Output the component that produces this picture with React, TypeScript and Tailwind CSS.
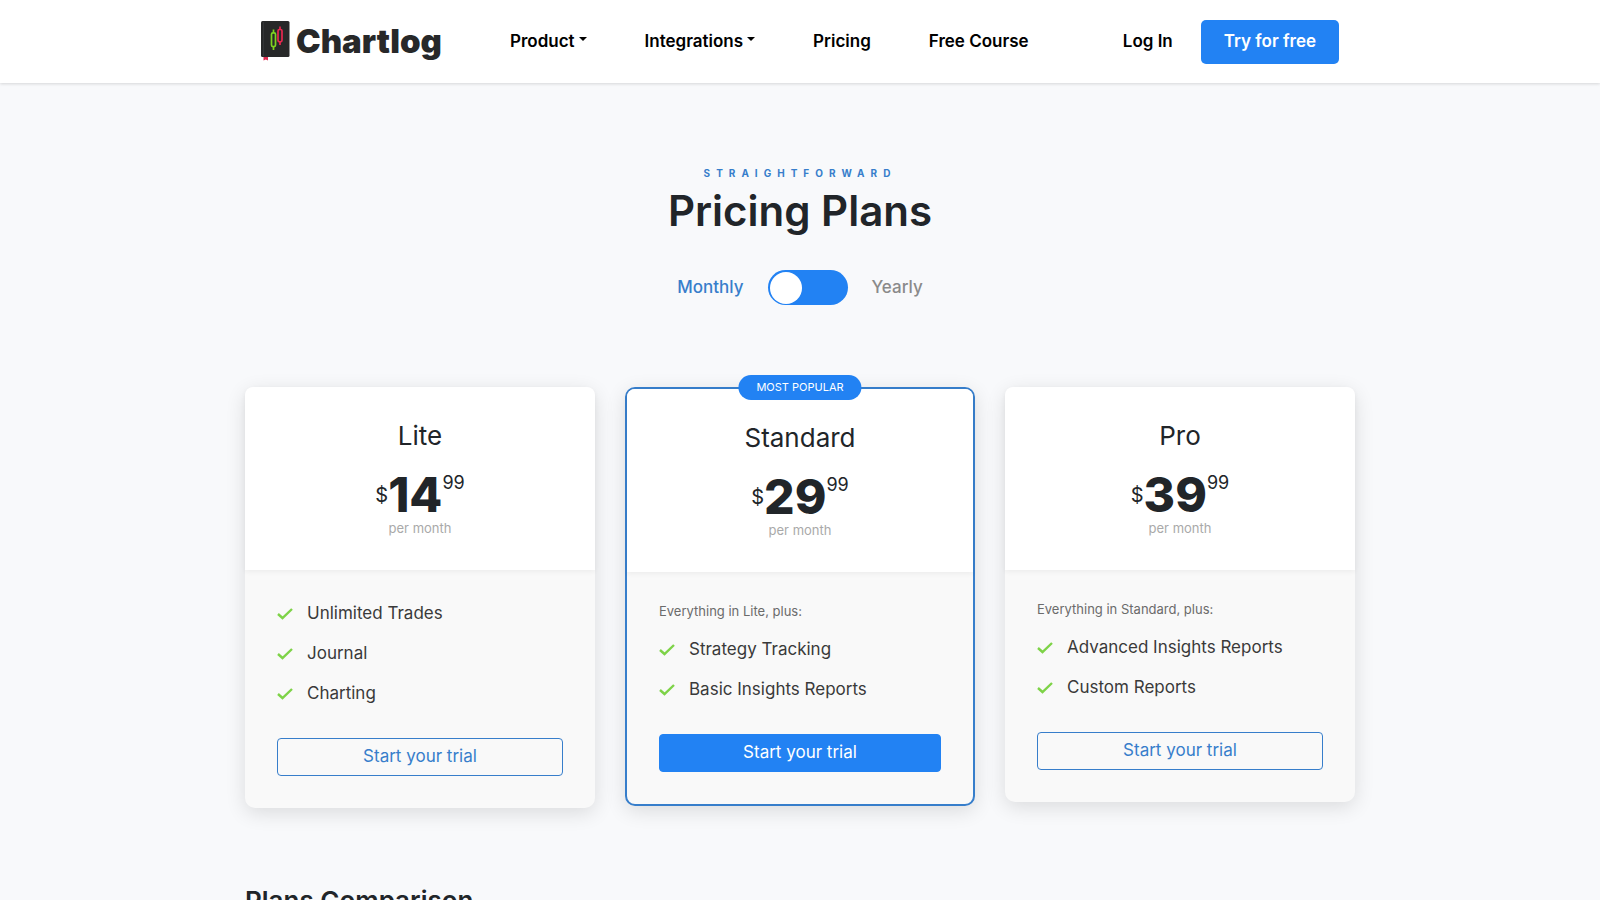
import React, { useState } from 'react'
import clsx from 'clsx'

type Plan = {
  name: string
  price: string
  note?: string
  features: string[]
  popular?: boolean
}

const plans: Plan[] = [
  { name: 'Lite', price: '14', features: ['Unlimited Trades', 'Journal', 'Charting'] },
  {
    name: 'Standard',
    price: '29',
    note: 'Everything in Lite, plus:',
    features: ['Strategy Tracking', 'Basic Insights Reports'],
    popular: true,
  },
  {
    name: 'Pro',
    price: '39',
    note: 'Everything in Standard, plus:',
    features: ['Advanced Insights Reports', 'Custom Reports'],
  },
]

const Logo = () => (
  <a href="#" className="flex items-center gap-1.5 pb-0.5" aria-label="Chartlog">
    <svg width="29" height="40" viewBox="0 0 29 40" aria-hidden="true">
      <path d="M1.500 0H27Q28.500 0 28.500 1.500V34.500Q28.500 36 27 36H1.500Q0 36 0 34.500V1.500Q0 0 1.500 0Z" fill="#272829" />
      <path d="M2.500 1V35" stroke="#333537" strokeWidth="1" />
      <path d="M2.500 36H7V39.500L4.800 38.500L2.500 39.500Z" fill="#e0284f" />
      <g fill="none" strokeWidth="1.700">
        <path d="M12.500 8.500V12M12.500 25.500V29" stroke="#7ed321" />
        <rect x="10.500" y="11.800" width="4" height="13.800" rx="1.500" stroke="#7ed321" />
        <path d="M19 5.500V9M19 20.500V24" stroke="#e8274f" />
        <rect x="17" y="8.500" width="4" height="12.300" rx="1.500" stroke="#e8274f" />
      </g>
    </svg>
    <span className="text-[33px] leading-9 font-black text-[#272829]">Chartlog</span>
  </a>
)

const Caret = () => (
  <svg width="8" height="4" viewBox="0 0 8 4" className="mb-1" aria-hidden="true">
    <path d="M0 0H8L4 4Z" fill="currentColor" />
  </svg>
)

const Check = () => (
  <svg width="16" height="16" viewBox="0 0 16 16" aria-hidden="true">
    <path d="M1 8L5.500 12L15 3" fill="none" stroke="#7ed348" strokeWidth="2.400" />
  </svg>
)

const Navbar = () => (
  <header className="bg-white shadow-[0_1px_3px_rgba(0,0,0,0.14)]">
    <nav className="mx-auto flex h-[83px] max-w-[1078px] items-center font-semibold text-[17px] leading-6 text-black">
      <Logo />
      <div className="ml-17 flex flex-1 items-center gap-[58px] pb-0.5">
        <button type="button" className="flex items-center gap-1">
          Product <Caret />
        </button>
        <button type="button" className="flex items-center gap-1">
          Integrations <Caret />
        </button>
        <a href="#pricing">Pricing</a>
        <a href="#course">Free Course</a>
      </div>
      <a href="#login" className="pb-0.5">
        Log In
      </a>
      <a href="#signup" className="ml-7 flex h-11 items-center rounded-[5px] bg-[#2282f3] px-[23px] pb-0.5 text-white">
        Try for free
      </a>
    </nav>
  </header>
)

const PlanCard = ({ plan }: { plan: Plan }) => (
  <article
    className={clsx(
      'relative rounded-[10px] bg-[#f9f9f9] shadow-[0_5px_20px_rgba(0,0,0,0.12)]',
      plan.popular && 'border-2 border-[#377ecb]'
    )}
  >
    {plan.popular && (
      <span className="absolute -top-3.5 left-1/2 -translate-x-1/2 rounded-full bg-[#2282f3] px-[18px] text-[11px] leading-[25px] whitespace-nowrap text-white">
        MOST POPULAR
      </span>
    )}
    <div className="rounded-t-[8px] bg-white pt-8 pb-8 text-center shadow-[0_2px_5px_rgba(0,0,0,0.05)]">
      <h2 className="mb-[18px] text-[26px] leading-[34px]">{plan.name}</h2>
      <div className="flex items-start justify-center">
        <span className="text-xl leading-12">$</span>
        <span className="text-5xl leading-12 font-extrabold">{plan.price}</span>
        <span className="text-lg leading-6">99</span>
      </div>
      <p className="text-[13px] leading-[19px] text-[#a9a9a9]">per month</p>
    </div>
    <div className="px-8 pt-[22px] pb-8">
      {plan.note && <p className="py-[7px] text-[13px] leading-5 text-[#6b6b6b]">{plan.note}</p>}
      <ul>
        {plan.features.map((feature) => (
          <li key={feature} className="flex h-10 items-center gap-3.5 pt-1 text-[17px] text-[#3a3a3a]">
            <Check />
            {feature}
          </li>
        ))}
      </ul>
      <button
        type="button"
        className={clsx(
          'mt-[26px] block h-[38px] w-full rounded border pb-0.5 text-[17px] leading-6',
          plan.popular ? 'border-[#2282f3] bg-[#2282f3] text-white' : 'border-[#377ecb] text-[#377ecb]'
        )}
      >
        Start your trial
      </button>
    </div>
  </article>
)

const App = () => {
  const [yearly, setYearly] = useState(false)

  return (
    <div className="min-h-screen bg-[#f8f9fb] font-['Inter','Open_Sans',sans-serif] text-[#212529]">
      <Navbar />
      <main className="mx-auto max-w-[1110px] pt-[82px] pb-20">
        <div className="text-center">
          <p className="text-[10px] leading-4 font-bold tracking-[6px] text-[#377ecb]">STRAIGHTFORWARD</p>
          <h1 className="mt-1.5 text-[42px] leading-12 font-semibold">Pricing Plans</h1>
        </div>

        <div className="mt-[35px] flex items-center justify-center gap-6 text-[17px] leading-6 font-medium">
          <span className={clsx('pb-0.5', yearly ? 'text-[#8a8a8a]' : 'text-[#377ecb]')}>Monthly</span>
          <label className="flex h-[35px] w-20 cursor-pointer items-center rounded-full bg-[#2282f3] p-0.5">
            <input
              type="checkbox"
              aria-label="Yearly billing"
              className="peer sr-only"
              checked={yearly}
              onChange={(e) => setYearly(e.target.checked)}
            />
            <span className="size-8 rounded-full bg-white transition-transform peer-checked:translate-x-11" />
          </label>
          <span className={clsx('pb-0.5', yearly ? 'text-[#377ecb]' : 'text-[#8a8a8a]')}>Yearly</span>
        </div>

        <section id="pricing" className="mt-[82px] grid grid-cols-3 items-start gap-[30px]">
          {plans.map((plan) => (
            <PlanCard key={plan.name} plan={plan} />
          ))}
        </section>

        <h2 className="mt-19 text-[26px] leading-[34px] font-semibold">Plans Comparison</h2>
      </main>
    </div>
  )
}

export default App
